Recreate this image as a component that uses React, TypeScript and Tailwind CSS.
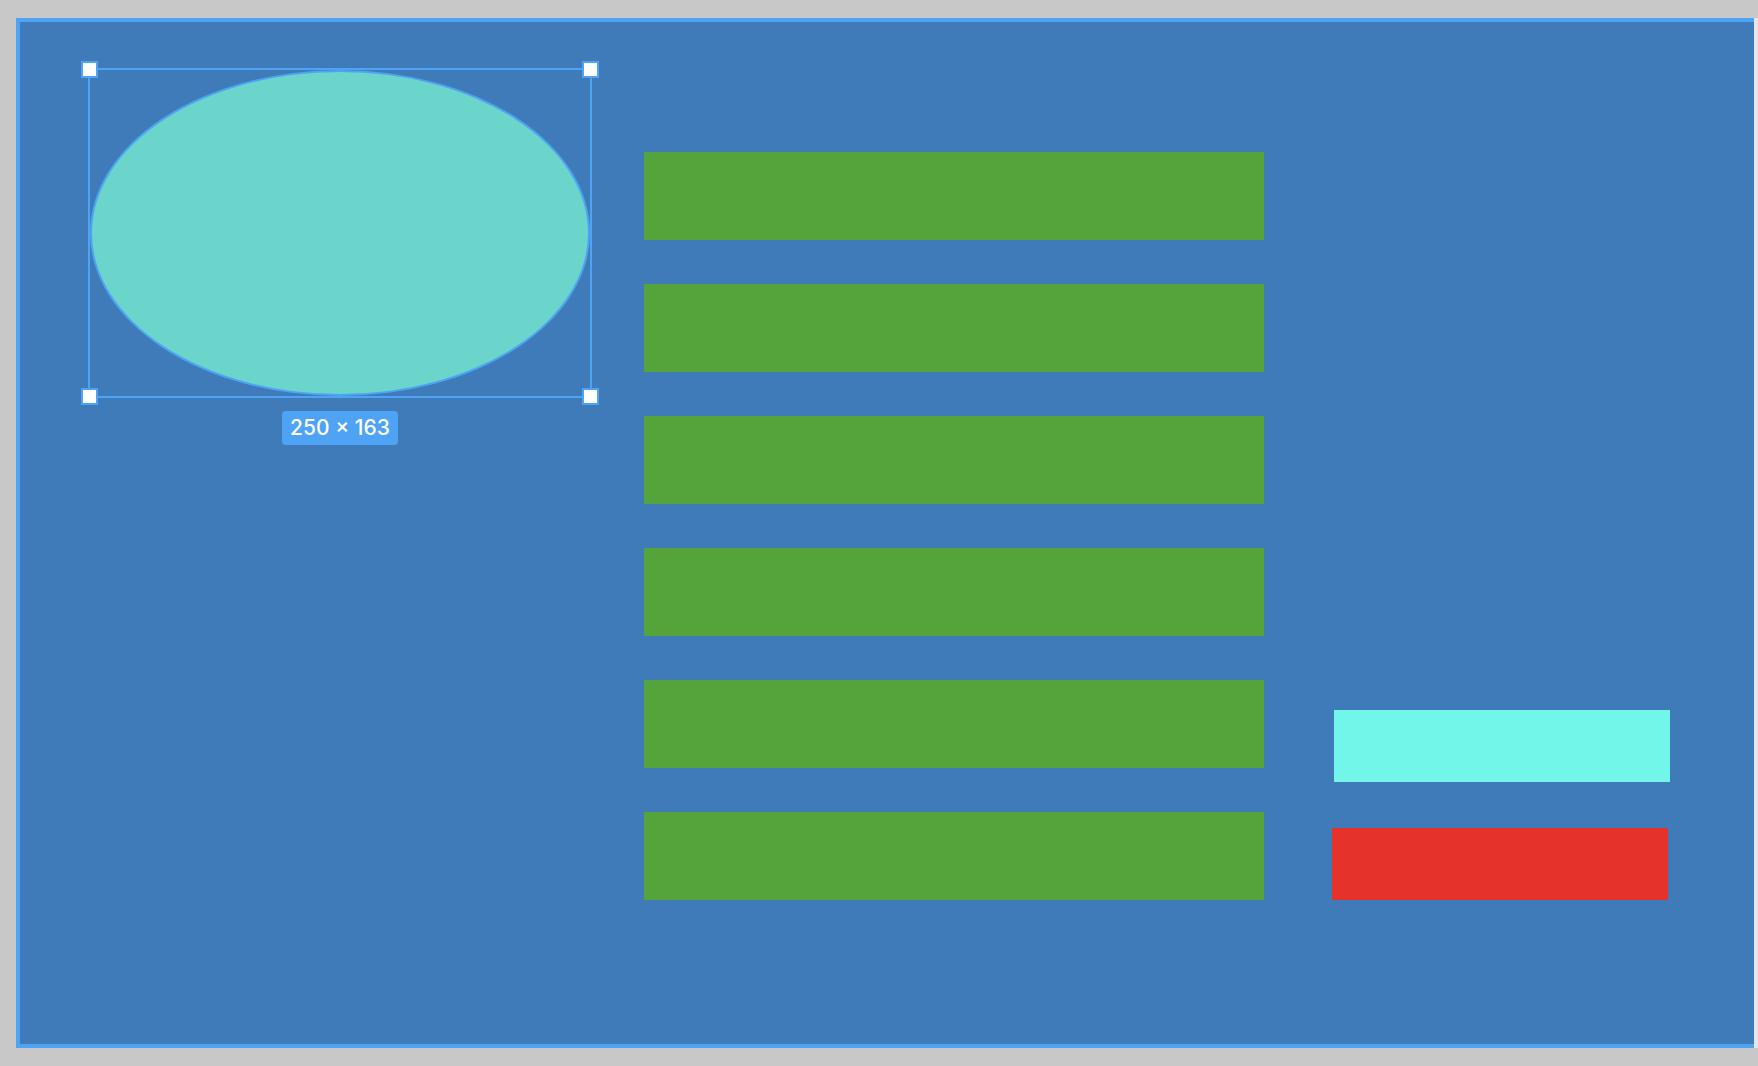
import React from "react";

const bars = [0, 1, 2, 3, 4, 5];

function Handle({ pos }: { pos: string }) {
  return (
    <div
      className={`absolute w-[17px] h-[17px] bg-white border-2 border-[#4ea3f5] ${pos}`}
    />
  );
}

export default function App() {
  return (
    <div
      className="w-[1758px] h-[1066px] bg-[#c8c8c8] overflow-hidden flex flex-col"
      style={{ fontFamily: "Inter, 'Noto Sans', sans-serif" }}
    >
      <div className="mt-[18px] h-[1030px] flex">
        <div className="ml-[16px] flex-1 h-full border-l-4 border-t-4 border-b-4 border-[#4ea3f5] bg-[#3f7bb8] flex items-start pl-[68px]">
          {/* Selected ellipse */}
          <div className="mt-[46px] flex flex-col items-center">
            <div className="relative w-[504px] h-[330px] border-2 border-[#4ea3f5]">
              <div className="w-full h-full rounded-[50%] bg-[#6bd4cb] border-2 border-[#4ea3f5]" />
              <Handle pos="left-[-9px] top-[-9px]" />
              <Handle pos="right-[-9px] top-[-9px]" />
              <Handle pos="left-[-9px] bottom-[-9px]" />
              <Handle pos="right-[-9px] bottom-[-9px]" />
            </div>
            <div className="mt-[13px] h-[34px] px-[8px] rounded-[4px] bg-[#4ea3f5] text-white text-[21px] font-medium leading-[34px] whitespace-nowrap">
              250 × 163
            </div>
          </div>

          {/* Green bars */}
          <div className="ml-[52px] mt-[130px] flex flex-col gap-[44px]">
            {bars.map((b) => (
              <div key={b} className="w-[620px] h-[88px] bg-[#55a43b]" />
            ))}
          </div>

          {/* Right rectangles */}
          <div className="ml-[68px] mt-[688px] flex flex-col">
            <div className="ml-[2px] w-[336px] h-[72px] bg-[#72f6e9]" />
            <div className="mt-[46px] w-[336px] h-[72px] bg-[#e5332c]" />
          </div>
        </div>
        <div className="w-[4px] h-full bg-[#e6e6e6]" />
      </div>
    </div>
  );
}
